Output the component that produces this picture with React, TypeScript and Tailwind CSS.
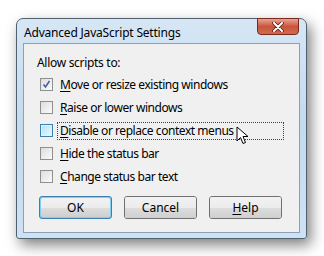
import React from "react";

// Vista-style "Advanced JavaScript Settings" dialog
const font = { fontFamily: '"Noto Sans", "Open Sans", Arial, sans-serif' };

interface OptionProps {
  accel: string;
  rest: string;
  checked?: boolean;
  hover?: boolean;
  focused?: boolean;
}

const Option: React.FC<OptionProps> = ({ accel, rest, checked, hover, focused }) => (
  <div className="flex items-center h-[23px]">
    <div
      className={`w-[13px] h-[13px] border flex items-center justify-center ${
        hover ? "border-[#3c7fb1] bg-[#dff3fc]" : "border-[#8e8f8f] bg-gradient-to-br from-[#dcdcdc] to-[#fbfbfb]"
      }`}
    >
      <div
        className={`w-[9px] h-[9px] flex items-center justify-center ${
          hover ? "bg-gradient-to-br from-[#b3e3f9] to-[#e8f7fe]" : "bg-gradient-to-br from-[#e0e0e0] to-[#f8f8f8]"
        }`}
      >
        {checked && (
          <svg width="9" height="9" viewBox="0 0 9 9">
            <path d="M1.5 4.5 L3.5 7 L7.5 1" fill="none" stroke="#4a5f97" strokeWidth="1.6" />
          </svg>
        )}
      </div>
    </div>
    <div
      className={`ml-[4px] pl-[2px] h-[18px] flex items-center tracking-[-0.45px] ${
        focused ? "border border-dotted border-[#404040] w-[227px]" : "border border-transparent"
      }`}
    >
      <span className="underline underline-offset-2">{accel}</span>
      <span>{rest}</span>
    </div>
  </div>
);

const Button: React.FC<{ label: React.ReactNode; primary?: boolean }> = ({ label, primary }) => (
  <div
    className={`w-[73px] h-[23px] rounded-[3px] border flex ${
      primary ? "border-[#3c7fb1] p-[1px] bg-[#7fd0f0]" : "border-[#707070]"
    }`}
  >
    <div className="flex-1 rounded-[2px] flex flex-col overflow-hidden relative">
      <div className="h-1/2 bg-gradient-to-b from-[#f2f2f2] to-[#ebebeb]" />
      <div className="h-1/2 bg-gradient-to-b from-[#dddddd] to-[#cfcfcf]" />
      <div className="absolute inset-0 flex items-center justify-center">{label}</div>
    </div>
  </div>
);

export default function App() {
  return (
    <div className="w-[324px] h-[256px] bg-white text-[12px] text-black relative" style={font}>
      <div className="absolute left-[16px] top-[18px] w-[291px] h-[221px] rounded-t-[7px] rounded-b-[3px] border border-[#51606f] bg-gradient-to-b from-[#d6e6f5] via-[#c4daee] to-[#cfe2f3] shadow-[4px_6px_14px_rgba(0,0,0,0.5)] flex flex-col px-[6px] pb-[5px]">
        <div className="h-[24px] flex items-start justify-between">
          <span className="mt-[5px] ml-[1px] tracking-[-0.2px]">Advanced JavaScript Settings</span>
          <div className="-mt-[1px] mr-[1px] w-[42px] h-[17px] rounded-b-[4px] border border-[#7a2a1d] bg-gradient-to-b from-[#e7a495] via-[#c9543b] to-[#cf6a4e] flex items-center justify-center">
            <svg width="12" height="10" viewBox="0 0 12 10">
              <path d="M2 1 L10 9 M10 1 L2 9" stroke="#5a1c12" strokeWidth="3.6" strokeLinecap="round" />
              <path d="M2 1 L10 9 M10 1 L2 9" stroke="#ffffff" strokeWidth="2" strokeLinecap="round" />
            </svg>
          </div>
        </div>
        <div className="flex-1 border border-[#8ba0b7] bg-[#f0f0f0] flex flex-col pl-[13px] pt-[10px]">
          <div className="h-[17px] flex items-center tracking-[-0.3px]">Allow scripts to:</div>
          <div className="mt-[2px] pl-[3px] flex flex-col">
            <Option accel="M" rest="ove or resize existing windows" checked />
            <Option accel="R" rest="aise or lower windows" />
            <Option accel="D" rest="isable or replace context menus" hover focused />
            <Option accel="H" rest="ide the status bar" />
            <Option accel="C" rest="hange status bar text" />
          </div>
          <div className="mt-[8px] ml-[2px] flex gap-[12px]">
            <Button label="OK" primary />
            <Button label="Cancel" />
            <Button
              label={
                <span>
                  <span className="underline underline-offset-2">H</span>elp
                </span>
              }
            />
          </div>
        </div>
      </div>
      <svg className="absolute left-[236px] top-[126px]" width="14" height="20" viewBox="0 0 14 20">
        <path d="M1 1 L1 15 L4.5 11.5 L7 17.5 L9.5 16.5 L7 10.5 L12 10.5 Z" fill="#ffffff" stroke="#000000" strokeWidth="1" strokeLinejoin="round" />
      </svg>
    </div>
  );
}
